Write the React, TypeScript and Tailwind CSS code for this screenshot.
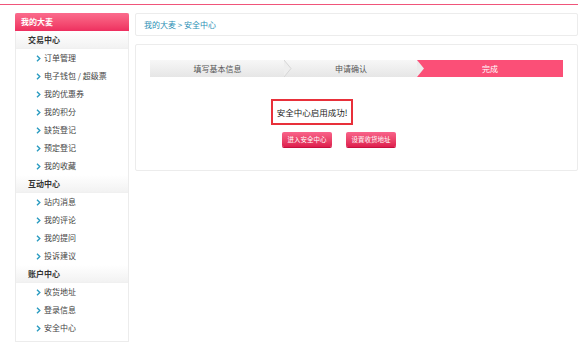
const groups = [
  {
    title: '交易中心',
    items: ['订单管理', '电子钱包 / 超级票', '我的优惠券', '我的积分', '缺货登记', '预定登记', '我的收藏'],
  },
  { title: '互动中心', items: ['站内消息', '我的评论', '我的提问', '投诉建议'] },
  { title: '账户中心', items: ['收货地址', '登录信息', '安全中心'] },
];

function Chevron() {
  return (
    <svg width="5" height="7" viewBox="0 0 5 7" className="mr-[3px] shrink-0">
      <path d="M1 0.8 L3.8 3.5 L1 6.2" fill="none" stroke="#2a9bc0" strokeWidth="1.4" />
    </svg>
  );
}

function Sidebar() {
  return (
    <div className="w-[114px] shrink-0 border border-[#ececec] bg-white">
      <div className="h-[18px] -mx-px -mt-px rounded-t-[2px] bg-gradient-to-b from-[#fb6b8d] to-[#ee2e5f] pl-[6px] text-[8px] font-bold leading-[18px] text-white">
        我的大麦
      </div>
      {groups.map((g) => (
        <div key={g.title}>
          <div className="h-[18px] border-b border-[#f0f0f0] bg-gradient-to-b from-[#ffffff] to-[#f2f2f2] pl-[12px] text-[8px] font-bold leading-[18px] text-[#333]">
            {g.title}
          </div>
          {g.items.map((it) => (
            <div key={it} className="flex h-[18px] items-center pl-[20px] text-[8px] text-[#444]">
              <Chevron />
              {it}
            </div>
          ))}
        </div>
      ))}
      <div className="h-[4px]" />
    </div>
  );
}

function Steps() {
  return (
    <div className="flex h-[17px] text-[8px] leading-[17px]">
      <div className="relative w-[135px] bg-gradient-to-b from-[#f7f7f7] to-[#e6e6e6] text-center text-[#555]">
        填写基本信息
        <svg className="absolute right-[-7px] top-0 z-10" width="8" height="17" viewBox="0 0 8 17">
          <path d="M0 0 L7 8.5 L0 17" fill="#eeeeee" stroke="#d6d6d6" strokeWidth="1" />
        </svg>
      </div>
      <div className="relative w-[132px] bg-gradient-to-b from-[#f7f7f7] to-[#e6e6e6] text-center text-[#555]">
        申请确认
      </div>
      <div className="relative flex-1 bg-[#fb4f77] text-center text-white">
        <svg className="absolute left-0 top-0" width="8" height="17" viewBox="0 0 8 17">
          <path d="M0 0 L7 8.5 L0 17 Z" fill="#ececec" />
        </svg>
        完成
      </div>
    </div>
  );
}

function PinkButton({ label }: { label: string }) {
  return (
    <button className="h-[15px] w-[50px] whitespace-nowrap rounded-[2px] bg-gradient-to-b from-[#f9628a] to-[#de1c4e] text-[6.5px] leading-[15px] text-white shadow-[0_1px_0_#c5123f]">
      {label}
    </button>
  );
}

export default function App() {
  return (
    <div
      className="h-[346px] w-[584px] bg-white"
      style={{ fontFamily: '"Noto Sans CJK SC", "Liberation Sans", sans-serif' }}
    >
      <div className="mt-[4px] h-px w-[578px] bg-[#f0557a]" />
      <div className="flex gap-[6px] pl-[15px] pt-[8px]">
        <Sidebar />
        <div className="flex w-[443px] flex-col gap-[8px]">
          <div className="h-[23px] rounded-[2px] border border-[#ececec] pl-[8px] text-[8px] leading-[21px] text-[#2b8fb5]">
            我的大麦 &gt; 安全中心
          </div>
          <div className="h-[127px] rounded-[2px] border border-[#ececec] px-[14px] pt-[15px]">
            <Steps />
            <div className="flex flex-col items-start pt-[22px]">
              <div className="ml-[121px] flex h-[26px] w-[82px] items-center justify-center whitespace-nowrap border-2 border-[#e8303a] text-[8.5px] text-[#222]">
                安全中心启用成功!
              </div>
              <div className="ml-[132px] mt-[7px] flex gap-[14px]">
                <PinkButton label="进入安全中心" />
                <PinkButton label="设置收货地址" />
              </div>
            </div>
          </div>
        </div>
      </div>
    </div>
  );
}
